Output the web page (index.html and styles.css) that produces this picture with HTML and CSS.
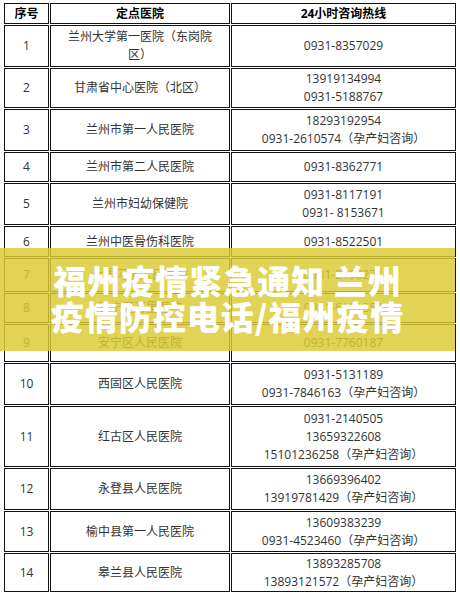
FILE: index.html
```html
<!DOCTYPE html>
<html lang="zh-CN">
<head>
<meta charset="utf-8">
<title>兰州定点医院</title>
<link rel="stylesheet" href="styles.css">
</head>
<body>
<div class="page">
  <table class="grid">
    <colgroup><col class="c1"><col class="c2"><col class="c3"></colgroup>
    <tr class="h22 head"><td>序号</td><td>定点医院</td><td>24小时咨询热线</td></tr>
    <tr class="h43"><td>1</td><td>兰州大学第一医院（东岗院区）</td><td>0931-8357029</td></tr>
    <tr class="h41"><td>2</td><td>甘肃省中心医院（北区）</td><td>13919134994<br>0931-5188767</td></tr>
    <tr class="h43"><td>3</td><td>兰州市第一人民医院</td><td>18293192954<br>0931-2610574（孕产妇咨询）</td></tr>
    <tr class="h31"><td>4</td><td>兰州市第二人民医院</td><td>0931-8362771</td></tr>
    <tr class="h43"><td>5</td><td>兰州市妇幼保健院</td><td>0931-8117191<br>0931- 8153671</td></tr>
    <tr class="h32"><td>6</td><td>兰州中医骨伤科医院</td><td>0931-8522501</td></tr>
    <tr class="h35"><td>7</td><td>七里河区人民医院</td><td>0931-2198271</td></tr>
    <tr class="h31"><td>8</td><td>安宁区万里医院</td><td>0931-6161354</td></tr>
    <tr class="h39"><td>9</td><td>安宁区人民医院</td><td>0931-7760187</td></tr>
    <tr class="h43"><td>10</td><td>西固区人民医院</td><td>0931-5131189<br>0931-7846163（孕产妇咨询）</td></tr>
    <tr class="h62"><td>11</td><td>红古区人民医院</td><td>0931-2140505<br>13659322608<br>15101236258（孕产妇咨询）</td></tr>
    <tr class="h43"><td>12</td><td>永登县人民医院</td><td>13669396402<br>13919781429（孕产妇咨询）</td></tr>
    <tr class="h42"><td>13</td><td>榆中县第一人民医院</td><td>13609383239<br>0931-4523460（孕产妇咨询）</td></tr>
    <tr class="h40"><td>14</td><td>皋兰县人民医院</td><td>13893285708<br>13893121572（孕产妇咨询）</td></tr>
  </table>
  <div class="banner">
    <span class="line">福州疫情紧急通知 兰州</span>
    <span class="line">疫情防控电话/福州疫情</span>
  </div>
</div>
</body>
</html>
```
FILE: styles.css
```css
html, body {
  margin: 0;
  padding: 0;
  background: #fff;
}
.page {
  position: relative;
  width: 460px;
  height: 601px;
  overflow: hidden;
  padding: 2px 0 0 3px;
  box-sizing: border-box;
}
.grid {
  border-collapse: separate;
  border-spacing: 1px;
  width: 452px;
  table-layout: fixed;
  font-family: "Open Sans", "Noto Sans CJK SC", sans-serif;
  font-size: 12px;
  line-height: 18px;
  color: #333;
}
.c1 { width: 45px; }
.c2 { width: 180px; }
.c3 { width: 225px; }
.grid td {
  box-sizing: border-box;
  border: 1px solid #111;
  text-align: center;
  vertical-align: middle;
  padding: 0 13px;
  white-space: nowrap;
}
.grid td:first-child {
  padding: 0;
}
.grid td:nth-child(2) {
  white-space: normal;
}
.head td {
  font-weight: bold;
  color: #000;
}
.h22 td { height: 21px; }
.h31 td { height: 30px; }
.h32 td { height: 31px; }
.h35 td { height: 34px; }
.h39 td { height: 38px; }
.h40 td { height: 39px; }
.h41 td { height: 40px; }
.h42 td { height: 41px; }
.h43 td { height: 42px; }
.h62 td { height: 61px; }
.banner {
  position: absolute;
  left: 0;
  top: 248px;
  width: 455px;
  height: 103px;
  background: rgba(218, 202, 52, 0.84);
  display: flex;
  flex-direction: column;
  align-items: center;
  justify-content: center;
  padding-bottom: 4px;
  box-sizing: border-box;
  font-family: "Noto Sans CJK SC", sans-serif;
  font-weight: 900;
  font-size: 33px;
  line-height: 36px;
  letter-spacing: 1px;
  color: #fff;
}
.line {
  display: block;
  white-space: nowrap;
}
```
